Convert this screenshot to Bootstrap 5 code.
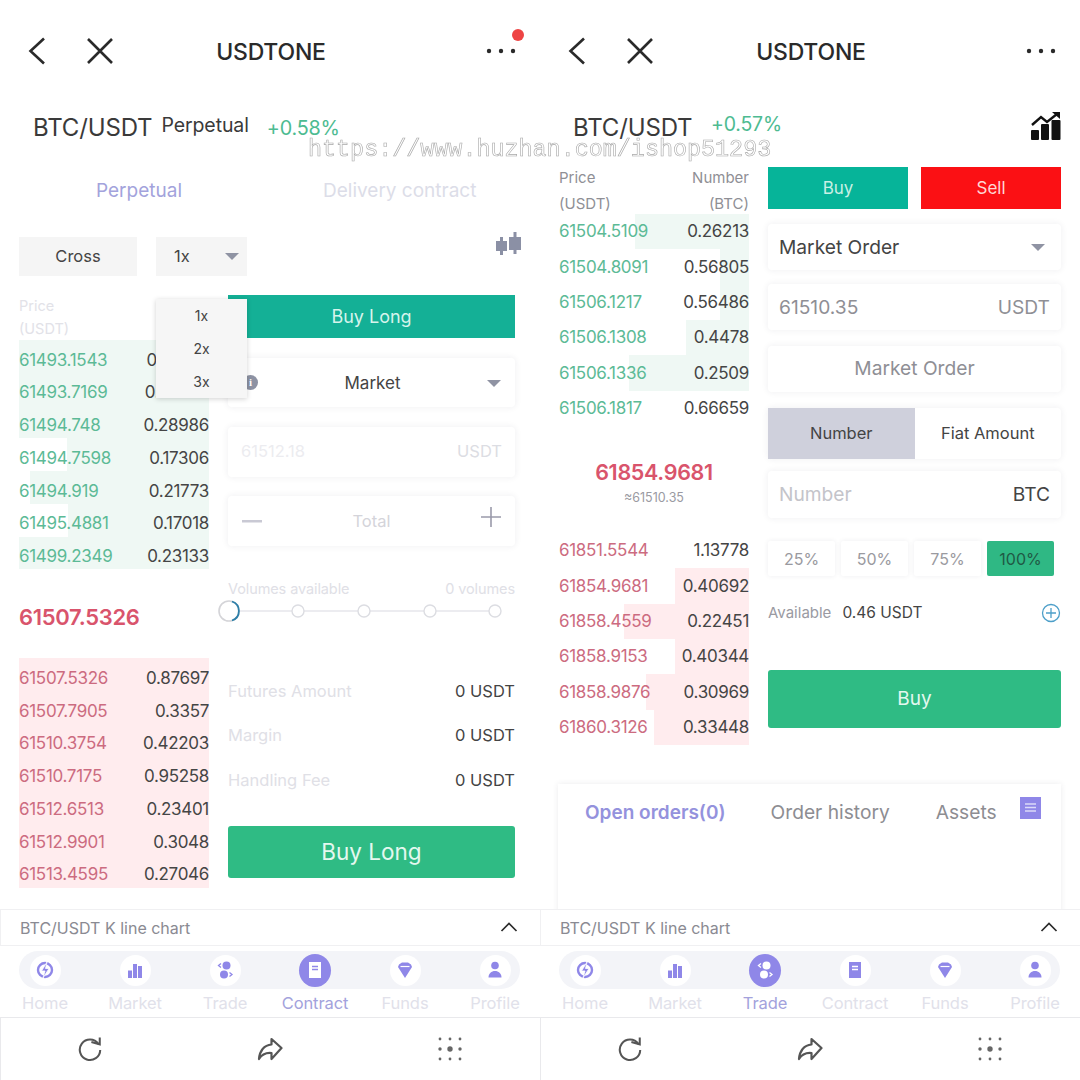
<!DOCTYPE html>
<html lang="en">
<head>
<meta charset="utf-8">
<title>USDTONE</title>
<link href="https://cdn.jsdelivr.net/npm/bootstrap@5.3.0/dist/css/bootstrap.min.css" rel="stylesheet">
<style>
html,body{margin:0;background:#fff}
body{font-family:Inter,"Noto Sans",sans-serif;color:#333;overflow:hidden}
.stage{width:1080px;height:1080px;position:relative;overflow:hidden}
.phone{width:540px;height:1080px;position:relative;flex:none}
.topbar{height:102px;display:grid;grid-template-columns:1fr auto 1fr;align-items:center;padding:0 24px 0 27px}
.topbar h1{font-size:23px;font-weight:500;margin:3px 1px 0 0;color:#2a2a2a;letter-spacing:-.2px}
.xgap{margin-left:39px}
.reddot{position:absolute;left:512px;top:29px;width:12px;height:12px;border-radius:50%;background:#ee4444}
.symrow{height:50px;padding-left:33px;align-items:center}
.sym{font-size:24px;color:#3a3a3a;letter-spacing:-.15px;font-weight:400;position:relative;top:1px}
.symsub{font-size:19.5px;color:#3a3a3a;margin-left:9px;position:relative;top:-1px;letter-spacing:-.1px}
.chg{font-size:19.8px;color:#4dbb91;position:relative;top:2px;letter-spacing:-.2px;margin-left:18px}
.ttabs{height:76px;font-size:19px;align-items:center;padding-top:2px}
.ttabs span:first-child{margin-left:96px;color:#a3a3dc;width:227px}
.ttabs span:last-child{color:#dcdde8}
.ctlrow{margin:9px 19px 0;height:39px;align-items:stretch;position:relative}
.ctlbox{background:#f5f5f5;font-size:16.5px;color:#444;display:flex;align-items:center}
.crossbox{width:118px;justify-content:center;margin-right:19px;padding-bottom:1px}
.levbox{width:91px;justify-content:space-between;padding:0 8px 1px 18px}
.caret{width:0;height:0;border-left:7px solid transparent;border-right:7px solid transparent;border-top:7px solid #8f93a3;display:block}
.candle{position:absolute;left:476px;top:-5px}
.levmenu.dropdown-menu{position:absolute;left:156px;top:299px;min-width:91px;width:91px;height:99px;padding:0;background:#f6f6f6;border:0;border-radius:0;box-shadow:0 1px 5px rgba(0,0,0,.18);z-index:5;margin:0}
.levmenu .dropdown-item{height:33px;line-height:33px;padding:0;text-align:center;font-size:14px;color:#444}
.tradeL{margin:19px 25px 0 19px;gap:19px}
.bookcol{width:190px;flex:none}
.bhead{font-size:14.5px;line-height:23px;height:46px;color:#e2e2e8;margin-top:-1px}
.brow{display:flex;justify-content:space-between;align-items:center;font-size:17px;letter-spacing:-.3px;color:#454545;background-repeat:no-repeat}
.bk7 .brow{height:32.75px;padding-top:8px}
.bk6 .brow{height:35.33px;padding-top:1px}
.bid{background-image:linear-gradient(to left,#eff8f4 var(--d),transparent var(--d))}
.ask{background-image:linear-gradient(to left,#ffecee var(--d),transparent var(--d))}
.bid span:first-child{color:#5cba96}
.ask span:first-child{color:#cc6b80}
.midL{height:89px;padding-top:29px;font-size:22px;font-weight:600;color:#d9546c;letter-spacing:-.3px;line-height:38px}
.formcol{width:287px;flex:none}
.longbar{height:43px;background:#14b096;color:#d6f4ec;font-size:18px;display:flex;align-items:center;justify-content:center}
.fld{background:#fff;box-shadow:0 0 7px rgba(40,40,70,.08);border-radius:4px;display:flex;align-items:center;justify-content:space-between;position:relative}
.infoball{position:absolute;left:15px;top:17px;width:15px;height:15px;border-radius:50%;background:#8d92a3;color:#fff;font:700 11px/15px "Liberation Serif",serif;text-align:center}
.mkt1{height:49px;margin-top:20px;font-size:17px;color:#444}
.mktlabel{padding-left:2px;padding-top:2px}
.mktcaret{position:absolute;right:14px;top:22px}
.pr1{height:50px;margin-top:20px;padding:0 13px 1px;font-size:16.5px;color:#ececf0}
.pr1 span:last-child{color:#dcdde3}
.tot1{height:50px;margin-top:19px;padding:0 14px;font-size:16.5px;color:#d4d4da}
.plusic{position:relative;top:-4px}
.volrow{margin-top:32px;height:20px;font-size:14.5px;color:#e0e0e6;letter-spacing:-.1px}
.sliderbox{height:22px;margin-top:2px}
.infotable{margin-top:47px}
.infor{height:44.5px;font-size:16.5px;color:#e0e0e6}
.infor b{font-weight:400;color:#444}
.greenbtn.btn{background:#2fbb84;color:#e4f8ef;border:0;border-radius:3px;width:100%;display:block;padding:0}
.btnlong.btn{height:52px;margin-top:23px;font-size:22.5px}
.footwrap{position:absolute;left:0;right:0;bottom:0;height:171px}
.kbar{height:37px;border-top:1px solid #f0f0f2;border-bottom:1px solid #f0f0f2;border-left:1px solid #f0f0f2;padding:0 22px 0 19px;font-size:16px;color:#8a8a92;display:flex;align-items:center;justify-content:space-between;background:#fff}
.kbar svg{position:relative;top:-1px}
.navicons{display:grid;grid-template-columns:repeat(6,90px);height:38px;margin-top:5px;position:relative}
.navicons::before{content:"";position:absolute;left:19px;right:20px;top:0;bottom:0;background:#f3f4f8;border-radius:19px}
.navbubble{position:relative;justify-self:center;align-self:center;width:31px;height:31px;border-radius:50%;background:#fff;color:#8f87e8;display:flex;align-items:center;justify-content:center}
.navbubble.on{background:#8f87e8;color:#fff;width:32px;height:33px}
.navnames{display:grid;grid-template-columns:repeat(6,90px);text-align:center;font-size:16.5px;color:#e1e1ea;height:26px;line-height:26px;letter-spacing:-.1px;padding-top:1px}
.navnames .on{color:#a3a2dc}
.brbar{height:63px;margin-top:2px;border-top:1px solid #e9e9ec;border-left:1px solid #e9e9ec;display:grid;grid-template-columns:repeat(3,180px);align-items:center;justify-items:center;margin-right:-1px}
.brbar svg{position:relative;left:-1px}
.tradeR{margin:12px 19px 0 19px;gap:19px}
.bheadR{font-size:15px;line-height:26px;height:50px;color:#8f8f95;padding-top:1px}
.midR{height:107px;text-align:center;padding-top:31px}
.midR div:first-child{font-size:21.5px;font-weight:600;color:#d9546c;line-height:30px;letter-spacing:-.3px}
.midR div:last-child{font-size:12.5px;color:#9a9aa2;line-height:20px;margin-top:1px}
.formR{width:293px;flex:none;padding-top:3px}
.bsbtn{height:42px;width:140px;display:flex;align-items:center;justify-content:center;font-size:17px;color:#c8f0e4;padding-top:1px}
.buyb{background:#06b499}
.sellb{background:#fb1014;color:#ffd7d5}
.fr{padding:0 11px;font-size:19.2px;color:#8f8f95}
.fr1{height:46px;margin-top:15px;color:#444}
.fr1 .caret{margin-right:5px}
.fr2{height:46px;margin-top:14px}
.fr3{height:46px;margin-top:16px;padding-bottom:1px}
.fr4{height:47px;margin-top:12px}
.fr4 .ph{color:#c4c4ca}
.fr .dk{color:#444}
.seg{height:51px;margin-top:16px;align-items:stretch}
.seg>div{flex:1;display:flex;align-items:center;justify-content:center;font-size:16.5px;color:#444}
.seg .act{background:#cfd0dc}
.pctrow{margin-top:23px;gap:6px}
.pct{width:67px;height:35px;display:flex;align-items:center;justify-content:center;font-size:16px;color:#9a9aa0;box-shadow:0 0 5px rgba(40,40,70,.08);border-radius:2px}
.pct.act{background:#2fb884;color:#1f5a45;box-shadow:none}
.avail{margin-top:26px;height:22px;font-size:15.5px;color:#444;align-items:center}
.avail span:first-child{color:#9a9aa2;margin-right:11px;font-size:15px}
.btnbuy.btn{height:58px;margin-top:46px;font-size:19px}
.ordcard{position:absolute;left:18px;top:784px;width:503px;height:140px;background:#fff;box-shadow:0 0 6px rgba(40,40,70,.09);padding:14px 27px 0;font-size:19.2px;color:#8d8d92}
.ordcard .sel{color:#9492dd;font-weight:600;margin-right:45px;font-size:19px}
.ordcard .oh{margin-right:46px}
.ordicon{position:absolute;left:462px;top:13px}
.chgR{position:absolute;left:171px;top:8px;margin:0;font-size:19.5px}
.charticon{position:absolute;left:491px;top:10px}
.wmark{position:absolute;left:308px;top:135px;font-family:"Liberation Mono",monospace;font-size:23.4px;line-height:30px;color:rgba(255,255,255,.55);-webkit-text-stroke:.6px #a8a8a8;white-space:nowrap;z-index:9;will-change:transform}
</style>
</head>
<body>
<svg width="0" height="0" class="position-absolute">
<defs>
<symbol id="i-back" viewBox="0 0 20 30"><path d="M17 2.500 3.500 15 17 27.500" fill="none" stroke="#2a2a2a" stroke-width="2.600"/></symbol>
<symbol id="i-x" viewBox="0 0 28 28"><path d="M2 2 26 26M26 2 2 26" fill="none" stroke="#2a2a2a" stroke-width="2.600"/></symbol>
<symbol id="i-home" viewBox="0 0 30 30"><circle cx="15" cy="15" r="7" fill="none" stroke="currentColor" stroke-width="2.400"/><path d="M17 7 11.500 16H15L13 23 19 13.500H15.500Z" fill="currentColor" stroke="#fff" stroke-width=".8"/></symbol>
<symbol id="i-market" viewBox="0 0 30 30"><path d="M8 15.500h4V23H8zM13 9h4v14h-4zM18 11h4v12h-4z" fill="currentColor"/></symbol>
<symbol id="i-trade" viewBox="0 0 30 30"><circle cx="16.500" cy="10.500" r="4" fill="currentColor"/><circle cx="14" cy="19.500" r="4" fill="currentColor"/><path d="M11 8.500 8.500 10.500 11 12.500M19.500 17.500 22 19.500 19.500 21.500" fill="none" stroke="currentColor" stroke-width="1.300"/></symbol>
<symbol id="i-funds" viewBox="0 0 30 30"><path d="M9 9.500 12 7.500H18L21 9.500 22 12 15 23 8 12Z" fill="currentColor"/><path d="M10.500 11.500h9" stroke="#fff" stroke-width="1.200"/></symbol>
<symbol id="i-user" viewBox="0 0 30 30"><circle cx="15" cy="10.500" r="3.800" fill="currentColor"/><path d="M8.500 22.500c0-4 3-6.500 6.500-6.500s6.500 2.500 6.500 6.500z" fill="currentColor"/></symbol>
<symbol id="i-refresh" viewBox="0 0 28 28"><path d="M23 8.500A11 11 0 1 0 25 15" fill="none" stroke="#555" stroke-width="2.200"/><path d="M15.500 6.500 24.500 9V1.500" fill="none" stroke="#555" stroke-width="2.200"/></symbol>
<symbol id="i-share" viewBox="0 0 26 24"><path d="M14.500 2 24.500 11 14.500 22V16C9 15.500 5 17 2 22 2.500 14 7 8 14.500 7.500Z" fill="none" stroke="#555" stroke-width="2.200" stroke-linejoin="round"/></symbol>
<symbol id="i-grid" viewBox="0 0 24 24"><g fill="#666"><circle cx="2" cy="2" r="1.400"/><circle cx="12" cy="2" r="1.400"/><circle cx="22" cy="2" r="1.400"/><circle cx="2" cy="12" r="1.700"/><circle cx="12" cy="12" r="2.700"/><circle cx="22" cy="12" r="1.700"/><circle cx="2" cy="22" r="1.400"/><circle cx="12" cy="22" r="1.400"/><circle cx="22" cy="22" r="1.400"/></g></symbol>
<symbol id="i-up" viewBox="0 0 18 10"><path d="M1.500 9 9 1.500 16.500 9" fill="none" stroke="#2a2a2a" stroke-width="1.700"/></symbol>
<symbol id="i-dots" viewBox="0 0 30 6"><g fill="#2a2a2a"><circle cx="3" cy="3" r="2.200"/><circle cx="15" cy="3" r="2.200"/><circle cx="27" cy="3" r="2.200"/></g></symbol>
</defs>
</svg>

<div class="stage d-flex">

<section class="phone">
  <div class="topbar">
    <div class="d-flex align-items-center"><svg width="20" height="30"><use href="#i-back"/></svg><svg width="28" height="28" class="xgap"><use href="#i-x"/></svg></div>
    <h1>USDTONE</h1>
    <div class="d-flex justify-content-end"><svg width="30" height="6"><use href="#i-dots"/></svg></div>
  </div>
  <span class="reddot"></span>
  <div class="symrow d-flex"><span class="sym">BTC/USDT</span><span class="symsub">Perpetual</span><span class="chg">+0.58%</span></div>
  <div class="ttabs d-flex"><span>Perpetual</span><span>Delivery contract</span></div>
  <div class="ctlrow d-flex">
    <div class="ctlbox crossbox">Cross</div>
    <div class="ctlbox levbox"><span>1x</span><i class="caret"></i></div>
    <svg class="candle" width="27" height="24" viewBox="0 0 27 24"><g fill="#8b90a5"><rect x="1" y="9" width="11" height="10"/><rect x="5" y="5" width="3" height="18"/><rect x="14" y="5" width="12" height="13"/><rect x="18.500" y="0" width="3" height="22"/></g></svg>
  </div>
  <ul class="dropdown-menu show levmenu">
    <li><a class="dropdown-item" href="#">1x</a></li>
    <li><a class="dropdown-item" href="#">2x</a></li>
    <li><a class="dropdown-item" href="#">3x</a></li>
  </ul>
  <div class="tradeL d-flex">
    <div class="bookcol bk7">
      <div class="bhead">Price<br>(USDT)</div>
      <div class="brow bid" style="--d:100%"><span>61493.1543</span><span>0.90013</span></div>
      <div class="brow bid" style="--d:100%"><span>61493.7169</span><span>0.56907</span></div>
      <div class="brow bid" style="--d:100%"><span>61494.748</span><span>0.28986</span></div>
      <div class="brow bid" style="--d:75%"><span>61494.7598</span><span>0.17306</span></div>
      <div class="brow bid" style="--d:94%"><span>61494.919</span><span>0.21773</span></div>
      <div class="brow bid" style="--d:74%"><span>61495.4881</span><span>0.17018</span></div>
      <div class="brow bid" style="--d:100%"><span>61499.2349</span><span>0.23133</span></div>
      <div class="midL">61507.5326</div>
      <div class="brow ask" style="--d:100%"><span>61507.5326</span><span>0.87697</span></div>
      <div class="brow ask" style="--d:100%"><span>61507.7905</span><span>0.3357</span></div>
      <div class="brow ask" style="--d:100%"><span>61510.3754</span><span>0.42203</span></div>
      <div class="brow ask" style="--d:100%"><span>61510.7175</span><span>0.95258</span></div>
      <div class="brow ask" style="--d:100%"><span>61512.6513</span><span>0.23401</span></div>
      <div class="brow ask" style="--d:100%"><span>61512.9901</span><span>0.3048</span></div>
      <div class="brow ask" style="--d:100%"><span>61513.4595</span><span>0.27046</span></div>
    </div>
    <div class="formcol">
      <div class="longbar">Buy Long</div>
      <div class="fld mkt1"><span class="infoball">i</span><span class="w-100 text-center mktlabel">Market</span><i class="caret mktcaret"></i></div>
      <div class="fld pr1"><span>61512.18</span><span>USDT</span></div>
      <div class="fld tot1">
        <svg width="20" height="3"><rect width="20" height="2.500" fill="#c9c9d4"/></svg>
        <span>Total</span>
        <svg class="plusic" width="20" height="20"><path d="M10 0V20M0 10H20" stroke="#9a9aaa" stroke-width="1.600"/></svg>
      </div>
      <div class="volrow d-flex justify-content-between"><span>Volumes available</span><span>0 volumes</span></div>
      <div class="sliderbox">
        <svg width="287" height="22" class="d-block overflow-visible" viewBox="0 0 287 22">
          <path d="M0 11H267" stroke="#ececf0" stroke-width="2"/>
          <g fill="#fff" stroke="#dcdde2" stroke-width="1.400"><circle cx="70" cy="11" r="6"/><circle cx="136" cy="11" r="6"/><circle cx="202" cy="11" r="6"/><circle cx="267" cy="11" r="6"/></g>
          <circle cx="1" cy="11" r="10" fill="#fff" stroke="#d4d4d8" stroke-width="1.600"/>
          <path d="M4 1.500A10 10 0 0 1 4 20.500" fill="none" stroke="#2d7fa8" stroke-width="1.800"/>
        </svg>
      </div>
      <div class="infotable">
        <div class="infor d-flex justify-content-between align-items-center"><span>Futures Amount</span><b>0 USDT</b></div>
        <div class="infor d-flex justify-content-between align-items-center"><span>Margin</span><b>0 USDT</b></div>
        <div class="infor d-flex justify-content-between align-items-center"><span>Handling Fee</span><b>0 USDT</b></div>
      </div>
      <button class="btn greenbtn btnlong" type="button">Buy Long</button>
    </div>
  </div>
  <div class="footwrap">
    <div class="kbar"><span>BTC/USDT K line chart</span><svg width="18" height="10"><use href="#i-up"/></svg></div>
    <div class="navicons">
      <span class="navbubble"><svg width="30" height="30"><use href="#i-home"/></svg></span>
      <span class="navbubble"><svg width="30" height="30"><use href="#i-market"/></svg></span>
      <span class="navbubble"><svg width="30" height="30"><use href="#i-trade"/></svg></span>
      <span class="navbubble on"><svg width="30" height="30" viewBox="0 0 30 30"><rect x="9" y="7" width="12" height="16" fill="#fff"/><path d="M12 11.500h6M12 14.500h6" stroke="#8f87e8" stroke-width="1.300"/></svg></span>
      <span class="navbubble"><svg width="30" height="30"><use href="#i-funds"/></svg></span>
      <span class="navbubble"><svg width="30" height="30"><use href="#i-user"/></svg></span>
    </div>
    <div class="navnames"><span>Home</span><span>Market</span><span>Trade</span><span class="on">Contract</span><span>Funds</span><span>Profile</span></div>
    <div class="brbar"><svg width="26" height="26"><use href="#i-refresh"/></svg><svg width="26" height="24"><use href="#i-share"/></svg><svg width="24" height="24"><use href="#i-grid"/></svg></div>
  </div>
</section>

<section class="phone">
  <div class="topbar">
    <div class="d-flex align-items-center"><svg width="20" height="30"><use href="#i-back"/></svg><svg width="28" height="28" class="xgap"><use href="#i-x"/></svg></div>
    <h1>USDTONE</h1>
    <div class="d-flex justify-content-end"><svg width="30" height="6"><use href="#i-dots"/></svg></div>
  </div>
  <div class="symrow d-flex position-relative"><span class="sym">BTC/USDT</span><span class="chg chgR">+0.57%</span>
    <svg class="charticon" width="30" height="28" viewBox="0 0 30 28"><g fill="#111"><rect x="0" y="18" width="8" height="10" rx="1"/><rect x="10" y="12" width="8" height="16" rx="1"/><rect x="20.500" y="8" width="9" height="20" rx="1"/></g><path d="M1 13 10 5 16 10 26 2" fill="none" stroke="#111" stroke-width="2.400"/><path d="M21 0H29V7Z" fill="#111"/></svg>
  </div>
  <div class="tradeR d-flex">
    <div class="bookcol bk6">
      <div class="bheadR d-flex justify-content-between"><div>Price<br>(USDT)</div><div class="text-end">Number<br>(BTC)</div></div>
      <div class="brow bid" style="--d:60%"><span>61504.5109</span><span>0.26213</span></div>
      <div class="brow bid" style="--d:15%"><span>61504.8091</span><span>0.56805</span></div>
      <div class="brow bid" style="--d:15%"><span>61506.1217</span><span>0.56486</span></div>
      <div class="brow bid" style="--d:33%"><span>61506.1308</span><span>0.4478</span></div>
      <div class="brow bid" style="--d:63%"><span>61506.1336</span><span>0.2509</span></div>
      <div class="brow bid" style="--d:0%"><span>61506.1817</span><span>0.66659</span></div>
      <div class="midR"><div>61854.9681</div><div>≈61510.35</div></div>
      <div class="brow ask" style="--d:0%"><span>61851.5544</span><span>1.13778</span></div>
      <div class="brow ask" style="--d:39%"><span>61854.9681</span><span>0.40692</span></div>
      <div class="brow ask" style="--d:66%"><span>61858.4559</span><span>0.22451</span></div>
      <div class="brow ask" style="--d:39%"><span>61858.9153</span><span>0.40344</span></div>
      <div class="brow ask" style="--d:54%"><span>61858.9876</span><span>0.30969</span></div>
      <div class="brow ask" style="--d:50%"><span>61860.3126</span><span>0.33448</span></div>
    </div>
    <div class="formR">
      <div class="d-flex justify-content-between">
        <div class="bsbtn buyb">Buy</div><div class="bsbtn sellb">Sell</div>
      </div>
      <div class="fld fr fr1"><span class="dk">Market Order</span><i class="caret"></i></div>
      <div class="fld fr fr2"><span>61510.35</span><span>USDT</span></div>
      <div class="fld fr fr3 justify-content-center"><span>Market Order</span></div>
      <div class="fld seg"><div class="act">Number</div><div>Fiat Amount</div></div>
      <div class="fld fr fr4"><span class="ph">Number</span><span class="dk">BTC</span></div>
      <div class="d-flex pctrow"><div class="pct">25%</div><div class="pct">50%</div><div class="pct">75%</div><div class="pct act">100%</div></div>
      <div class="avail d-flex"><span>Available</span><span>0.46 USDT</span>
        <svg class="ms-auto" width="20" height="20" viewBox="0 0 20 20"><circle cx="10" cy="10" r="8.500" fill="none" stroke="#4d9fc9" stroke-width="1.300"/><path d="M10 5V15M5 10H15" stroke="#4d9fc9" stroke-width="1.300"/></svg>
      </div>
      <button class="btn greenbtn btnbuy" type="button">Buy</button>
    </div>
  </div>
  <div class="ordcard">
    <span class="sel">Open orders(0)</span><span class="oh">Order history</span><span>Assets</span>
    <svg class="ordicon" width="21" height="22" viewBox="0 0 21 22"><rect width="21" height="22" fill="#8f87e8"/><path d="M5 7h11M5 10.500h11M5 14h11" stroke="#dcdaf8" stroke-width="1.300"/></svg>
  </div>
  <div class="footwrap">
    <div class="kbar"><span>BTC/USDT K line chart</span><svg width="18" height="10"><use href="#i-up"/></svg></div>
    <div class="navicons">
      <span class="navbubble"><svg width="30" height="30"><use href="#i-home"/></svg></span>
      <span class="navbubble"><svg width="30" height="30"><use href="#i-market"/></svg></span>
      <span class="navbubble on"><svg width="30" height="30"><use href="#i-trade"/></svg></span>
      <span class="navbubble"><svg width="30" height="30" viewBox="0 0 30 30"><rect x="9" y="7" width="12" height="16" fill="#8f87e8"/><path d="M12 11.500h6M12 14.500h6" stroke="#fff" stroke-width="1.300"/></svg></span>
      <span class="navbubble"><svg width="30" height="30"><use href="#i-funds"/></svg></span>
      <span class="navbubble"><svg width="30" height="30"><use href="#i-user"/></svg></span>
    </div>
    <div class="navnames"><span>Home</span><span>Market</span><span class="on">Trade</span><span>Contract</span><span>Funds</span><span>Profile</span></div>
    <div class="brbar"><svg width="26" height="26"><use href="#i-refresh"/></svg><svg width="26" height="24"><use href="#i-share"/></svg><svg width="24" height="24"><use href="#i-grid"/></svg></div>
  </div>
</section>

<div class="wmark">https://www.huzhan.com/ishop51293</div>
</div>
</body>
</html>
